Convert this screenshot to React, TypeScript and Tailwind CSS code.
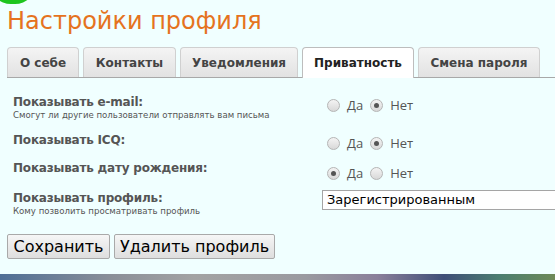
import React, { useState } from 'react';

const tabs = [
  { label: 'О себе', w: 'w-[72px]' },
  { label: 'Контакты', w: 'w-[93px]' },
  { label: 'Уведомления', w: 'w-[118px]' },
  { label: 'Приватность', w: 'w-[112px]' },
  { label: 'Смена пароля', w: 'w-[122px]' },
];

const Radio: React.FC<{ checked: boolean; label: string; onClick: () => void }> = ({ checked, label, onClick }) => (
  <button onClick={onClick} className="flex items-center gap-[7px] text-[13px] text-[#555]">
    <span className="w-[13px] h-[13px] rounded-full border border-[#b5b5b5] bg-gradient-to-b from-[#f4f4f4] to-[#d8d8d8] flex items-center justify-center">
      {checked && <span className="w-[5px] h-[5px] rounded-full bg-[#555]" />}
    </span>
    <span className="font-['Open_Sans',sans-serif]">{label}</span>
  </button>
);

export default function App() {
  const [active, setActive] = useState(3);
  const [vals, setVals] = useState<Record<string, boolean>>({ email: false, icq: false, birth: true });

  const rows = [
    { key: 'email', label: 'Показывать e-mail:', hint: 'Смогут ли другие пользователи отправлять вам письма', h: 'h-[38px]', pt: 'pt-[1px]' },
    { key: 'icq', label: 'Показывать ICQ:', h: 'h-[28px]', pt: 'pt-[1px]' },
    { key: 'birth', label: 'Показывать дату рождения:', h: 'h-[30px]', pt: 'pt-[3px]' },
  ];

  return (
    <div className="relative min-h-[280px] flex flex-col bg-[#f0ffff] overflow-hidden font-['DejaVu_Sans',Verdana,sans-serif]">
      {/* green blob */}
      <div className="absolute -top-[38px] -left-[10px] w-[46px] h-[42px] rounded-full bg-[#1ec51e]" />

      <div className="flex-1 pl-[7px]">
        <h1 className="text-[#e5731e] text-[24px] leading-none pt-[9px] h-[47px]">Настройки профиля</h1>

        {/* Tabs */}
        <div className="flex gap-[4px] border-b border-[#a8a8a8] h-[31px]">
          {tabs.map((t, i) => (
            <button
              key={t.label}
              onClick={() => setActive(i)}
              className={`${t.w} rounded-t-[4px] border border-b-0 text-[12px] font-bold flex items-center justify-center ${
                active === i
                  ? 'bg-white border-[#bdbdbd] text-[#222] h-[31px]'
                  : 'bg-gradient-to-b from-[#f4f4f4] to-[#e2e2e2] border-[#d0d0d0] text-[#444] h-[30px]'
              }`}
            >
              {t.label}
            </button>
          ))}
        </div>

        {/* Form */}
        <div className="pl-[6px] pt-[17px] text-[#555]">
          {rows.map(r => (
            <div key={r.key} className={`grid grid-cols-[314px_1fr] items-start ${r.h}`}>
              <div>
                <div className="text-[12px] font-bold leading-[15px] tracking-[-0.2px]">{r.label}</div>
                {r.hint && <div className="text-[8.6px] leading-[11px]">{r.hint}</div>}
              </div>
              <div className={`flex items-center gap-[7px] ${r.pt}`}>
                <Radio checked={vals[r.key]} label="Да" onClick={() => setVals({ ...vals, [r.key]: true })} />
                <Radio checked={!vals[r.key]} label="Нет" onClick={() => setVals({ ...vals, [r.key]: false })} />
              </div>
            </div>
          ))}

          <div className="grid grid-cols-[309px_1fr] items-start">
            <div>
              <div className="text-[12px] font-bold leading-[15px] tracking-[-0.2px]">Показывать профиль:</div>
              <div className="text-[8.6px] leading-[11px]">Кому позволить просматривать профиль</div>
            </div>
            <div className="h-[20px] border border-[#a5a5a5] bg-white text-[13px] text-black pl-[4px] leading-[18px] -mr-[10px] -mt-[1px]">
              Зарегистрированным
            </div>
          </div>
        </div>

        <div className="flex gap-[4px] mt-[17px]">
          <button className="w-[103px] h-[25px] border border-[#a9a9a9] rounded-[2px] bg-gradient-to-b from-[#f6f6f6] to-[#dedede] text-[16px] text-black">
            Сохранить
          </button>
          <button className="w-[161px] h-[25px] border border-[#a9a9a9] rounded-[2px] bg-gradient-to-b from-[#f6f6f6] to-[#dedede] text-[16px] text-black">
            Удалить профиль
          </button>
        </div>
      </div>

      {/* desktop edge */}
      <div className="h-[6px] bg-[linear-gradient(to_right,#4f6f96,#8a8f98_20%,#a3a3a3_35%,#9a9aa0_55%,#8a7f9a_68%,#3f4f78_80%,#4a7e70_90%,#6e8a58)]" />
    </div>
  );
}
